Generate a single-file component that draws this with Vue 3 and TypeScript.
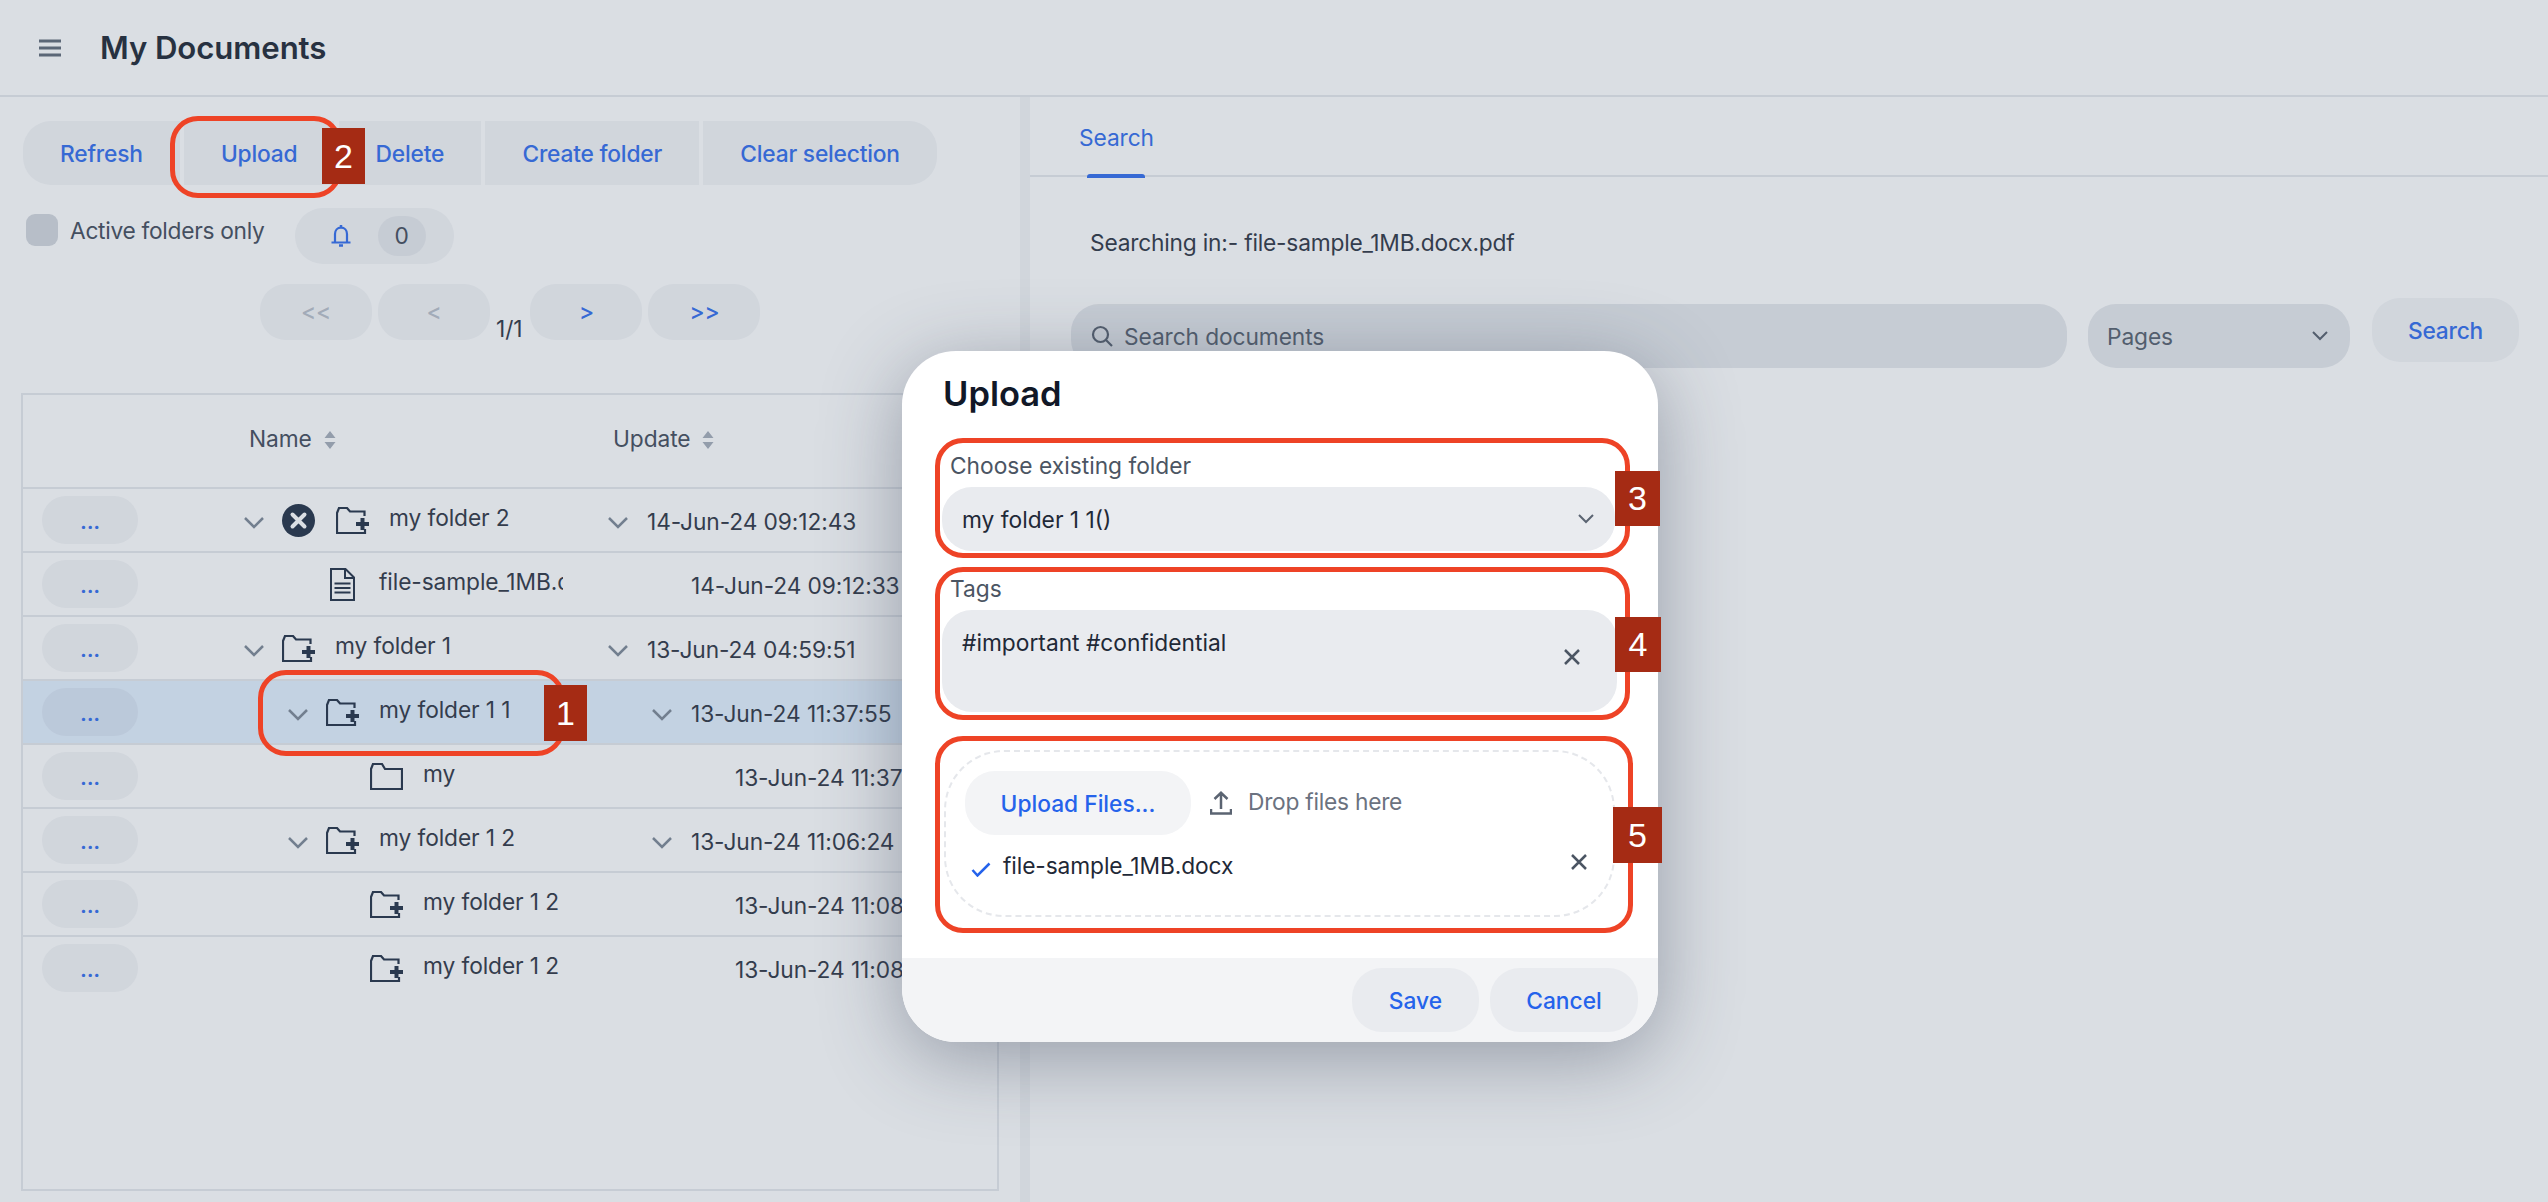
<script setup lang="ts">
interface TreeRow {
  name: string
  date: string
  depth: number
  icon: 'folderPlus' | 'folder' | 'file'
  open: boolean
  removable?: boolean
  selected?: boolean
}

const toolbar = ['Refresh', 'Upload', 'Delete', 'Create folder', 'Clear selection']

const rows: TreeRow[] = [
  { name: 'my folder 2', date: '14-Jun-24 09:12:43', depth: 0, icon: 'folderPlus', open: true, removable: true },
  { name: 'file-sample_1MB.docx.pdf', date: '14-Jun-24 09:12:33', depth: 1, icon: 'file', open: false },
  { name: 'my folder 1', date: '13-Jun-24 04:59:51', depth: 0, icon: 'folderPlus', open: true },
  { name: 'my folder 1 1', date: '13-Jun-24 11:37:55', depth: 1, icon: 'folderPlus', open: true, selected: true },
  { name: 'my', date: '13-Jun-24 11:37:55', depth: 2, icon: 'folder', open: false },
  { name: 'my folder 1 2', date: '13-Jun-24 11:06:24', depth: 1, icon: 'folderPlus', open: true },
  { name: 'my folder 1 2', date: '13-Jun-24 11:08:10', depth: 2, icon: 'folderPlus', open: false },
  { name: 'my folder 1 2', date: '13-Jun-24 11:08:10', depth: 2, icon: 'folderPlus', open: false }
]

const marks = [
  { x: 258, y: 670, w: 307, h: 86 },
  { x: 170, y: 116, w: 172, h: 82 },
  { x: 935, y: 438, w: 695, h: 120 },
  { x: 935, y: 567, w: 695, h: 153 },
  { x: 935, y: 736, w: 698, h: 197 }
]

const badges = [
  { n: 1, x: 544, y: 685, w: 43, h: 56 },
  { n: 2, x: 322, y: 128, w: 43, h: 56 },
  { n: 3, x: 1615, y: 471, w: 45, h: 55 },
  { n: 4, x: 1615, y: 617, w: 46, h: 55 },
  { n: 5, x: 1613, y: 807, w: 49, h: 56 }
]

const box = (m: { x: number; y: number; w: number; h: number }) => ({
  left: m.x + 'px',
  top: m.y + 'px',
  width: m.w + 'px',
  height: m.h + 'px'
})
</script>

<template>
  <div class="page">
    <header class="topbar">
      <svg class="menu-icon" width="22" height="18" viewBox="0 0 22 18">
        <path d="M0 2h22M0 9h22M0 16h22" stroke="#56606f" stroke-width="3" fill="none" />
      </svg>
      <h1 class="page-title">My Documents</h1>
    </header>

    <main class="content">
      <section class="left">
        <div class="toolbar">
          <button v-for="label in toolbar" :key="label" class="tool-btn">{{ label }}</button>
        </div>

        <div class="filters">
          <span class="checkbox"></span>
          <span class="check-label">Active folders only</span>
          <div class="notify">
            <svg width="20" height="24" viewBox="0 0 20 24" fill="none" stroke="#2563eb" stroke-width="2.200">
              <path d="M4 18V10c0-3.600 2.400-6.400 6-6.400s6 2.800 6 6.400v8M0.500 18.500h19" />
              <path d="M10 1v2.500M8 21.500h4" stroke-width="2.500" />
            </svg>
            <span class="count">0</span>
          </div>
        </div>

        <div class="pager">
          <button class="page-btn off">&lt;&lt;</button>
          <button class="page-btn off">&lt;</button>
          <span class="page-num">1/1</span>
          <button class="page-btn">&gt;</button>
          <button class="page-btn">&gt;&gt;</button>
        </div>

        <div class="table">
          <div class="thead">
            <div class="th name-th">
              Name
              <svg class="sort" width="12" height="18" viewBox="0 0 12 18"><path d="M6 0l5.500 7H.5zM6 18l5.500-7H.5z" /></svg>
            </div>
            <div class="th date-th">
              Update
              <svg class="sort" width="12" height="18" viewBox="0 0 12 18"><path d="M6 0l5.500 7H.5zM6 18l5.500-7H.5z" /></svg>
            </div>
          </div>

          <div v-for="(row, i) in rows" :key="i" class="row" :class="{ selected: row.selected }">
            <div class="action-cell"><button class="more">...</button></div>

            <div class="name-cell" :style="{ paddingLeft: row.depth * 44 + 'px' }">
              <span class="chev-slot">
                <svg v-if="row.open" width="22" height="13" viewBox="0 0 22 13" fill="none" stroke="#75808f" stroke-width="2.500">
                  <path d="M2 2l9 9 9-9" />
                </svg>
              </span>
              <svg v-if="row.removable" class="remove" width="33" height="33" viewBox="0 0 33 33">
                <circle cx="16.500" cy="16.500" r="16.500" fill="#14233a" />
                <path d="M10.500 10.500l12 12M22.500 10.500l-12 12" stroke="#fff" stroke-width="4" stroke-linecap="round" />
              </svg>
              <span class="icon-box">
                <svg v-if="row.icon === 'folderPlus'" width="33" height="27" viewBox="0 0 33 27" fill="none" stroke="#14233a" stroke-width="2.200">
                  <path d="M28.500 9V4.500H14L11 1H3L1 6v20h28v-4" />
                  <path d="M20 17h13M26.500 11v12" stroke-width="4" />
                </svg>
                <svg v-else-if="row.icon === 'folder'" width="33" height="27" viewBox="0 0 33 27" fill="none" stroke="#14233a" stroke-width="2.200">
                  <path d="M32 26V6H15L12 1H3L1 6v20z" />
                </svg>
                <svg v-else width="25" height="33" viewBox="0 0 25 33" fill="none" stroke="#14233a" stroke-width="2">
                  <path d="M1 1h14.500L24 9.500V32H1z" />
                  <path d="M15 1v9h9" />
                  <path d="M4.500 15.500h16M4.500 20h16M4.500 24.500h16" />
                </svg>
              </span>
              <span class="name-text">{{ row.name }}</span>
            </div>

            <div class="date-cell" :style="{ paddingLeft: row.depth * 44 + 'px' }">
              <span class="date-slot">
                <svg v-if="row.open" width="22" height="13" viewBox="0 0 22 13" fill="none" stroke="#75808f" stroke-width="2.500">
                  <path d="M2 2l9 9 9-9" />
                </svg>
              </span>
              <span class="date-text">{{ row.date }}</span>
            </div>
          </div>
        </div>
      </section>

      <div class="splitter"></div>

      <section class="right">
        <div class="tabs">
          <span class="tab">Search</span>
        </div>
        <p class="searching">Searching in:- file-sample_1MB.docx.pdf</p>
        <div class="search-row">
          <div class="search-input">
            <svg width="22" height="22" viewBox="0 0 22 22" fill="none" stroke="#4b5563" stroke-width="2.200">
              <circle cx="9.500" cy="9.500" r="7.500" />
              <path d="M15 15l6 6" />
            </svg>
            <span>Search documents</span>
          </div>
          <div class="pages-select">
            <span>Pages</span>
            <svg width="16" height="10" viewBox="0 0 16 10" fill="none" stroke="#4b5563" stroke-width="2">
              <path d="M1 1l7 7 7-7" />
            </svg>
          </div>
          <button class="search-btn">Search</button>
        </div>
      </section>
    </main>

    <div class="overlay"></div>

    <div class="modal">
      <div class="modal-body">
        <h2 class="modal-title">Upload</h2>

        <label class="field-label first">Choose existing folder</label>
        <div class="select">
          <span>my folder 1 1()</span>
          <svg width="16" height="10" viewBox="0 0 16 10" fill="none" stroke="#5b6472" stroke-width="2">
            <path d="M1 1l7 7 7-7" />
          </svg>
        </div>

        <label class="field-label">Tags</label>
        <div class="tags">
          <span>#important #confidential</span>
          <svg class="tags-x" width="16" height="16" viewBox="0 0 16 16" stroke="#4b5563" stroke-width="2.500">
            <path d="M1 1l14 14M15 1L1 15" />
          </svg>
        </div>

        <div class="dropzone">
          <div class="drop-top">
            <button class="upload-btn">Upload Files...</button>
            <svg width="22" height="24" viewBox="0 0 22 24" fill="none" stroke="#5b6472" stroke-width="2.500">
              <path d="M11 18V2M4.500 8L11 1.800 17.500 8" />
              <path d="M1 18v4.500h20V18" />
            </svg>
            <span class="drop-text">Drop files here</span>
          </div>
          <div class="file-row">
            <svg class="check" width="20" height="15" viewBox="0 0 20 15" fill="none" stroke="#2563eb" stroke-width="2.500">
              <path d="M1.500 8l5 5.500L18.500 1.500" />
            </svg>
            <span class="file-name">file-sample_1MB.docx</span>
            <svg class="file-x" width="16" height="16" viewBox="0 0 16 16" stroke="#4b5563" stroke-width="2.500">
              <path d="M1 1l14 14M15 1L1 15" />
            </svg>
          </div>
        </div>
      </div>

      <div class="modal-footer">
        <button class="foot-btn save">Save</button>
        <button class="foot-btn cancel">Cancel</button>
      </div>
    </div>

    <div v-for="(m, i) in marks" :key="'m' + i" class="mark" :style="box(m)"></div>
    <div v-for="b in badges" :key="'b' + b.n" class="badge" :style="box(b)">{{ b.n }}</div>
  </div>
</template>

<style scoped>
.page {
  position: relative;
  width: 100%;
  height: 1202px;
  overflow: hidden;
  background: #fff;
  color: #1f2937;
  font-family: Inter, "Noto Sans", sans-serif;
  font-size: 22.75px;
  letter-spacing: -0.1px;
}

button {
  border: none;
  font-family: inherit;
  font-size: 22.75px;
  font-weight: 500;
  letter-spacing: -0.2px;
  color: #2563eb;
  background: #f3f4f6;
  padding: 0;
}

.topbar {
  display: flex;
  align-items: center;
  gap: 39px;
  height: 95px;
  padding-left: 39px;
  border-bottom: 2px solid #e5e7eb;
}

.page-title {
  margin: 0;
  font-size: 31.2px;
  font-weight: 600;
  color: #111827;
}

.content {
  display: flex;
  height: 1105px;
}

.left {
  width: 1020px;
  flex-shrink: 0;
  padding-top: 24px;
}

.toolbar {
  display: flex;
  gap: 4.25px;
  margin-left: 23px;
}

.tool-btn {
  height: 64px;
  padding: 0 37px;
}

.tool-btn:first-child {
  border-radius: 28px 0 0 28px;
}

.tool-btn:last-child {
  border-radius: 0 28px 28px 0;
}

.filters {
  display: flex;
  align-items: flex-start;
  margin: 23px 0 0 26px;
}

.checkbox {
  width: 32px;
  height: 32px;
  margin-top: 6px;
  border-radius: 9px;
  background: #d1d5db;
}

.check-label {
  margin-left: 12px;
  line-height: 46px;
  color: #374151;
  letter-spacing: -0.3px;
}

.notify {
  display: flex;
  align-items: center;
  width: 159px;
  height: 56px;
  margin-left: 30px;
  padding-left: 36px;
  box-sizing: border-box;
  border-radius: 28px;
  background: #f3f4f6;
}

.count {
  width: 48px;
  height: 40px;
  margin-left: 27px;
  line-height: 40px;
  text-align: center;
  border-radius: 20px;
  background: #e5e7eb;
  color: #374151;
}

.pager {
  display: flex;
  gap: 6px;
  margin: 20px 0 0 260px;
  height: 56px;
}

.page-btn {
  width: 112px;
  height: 56px;
  border-radius: 26px;
  padding-bottom: 2px;
}

.page-btn.off {
  color: #b4bbc6;
}

.page-num {
  align-self: flex-end;
  margin-bottom: -2px;
  padding-right: 2px;
  line-height: 26px;
  color: #1f2937;
}

.table {
  width: 978px;
  height: 798px;
  box-sizing: border-box;
  margin: 53px 0 0 21px;
  overflow: hidden;
  border: 2px solid #e5e7eb;
}

.thead {
  display: flex;
  align-items: center;
  height: 94px;
  padding-bottom: 6px;
  box-sizing: border-box;
  border-bottom: 2px solid #e5e7eb;
  color: #374151;
}

.th {
  display: flex;
  align-items: center;
  gap: 12px;
  font-weight: 400;
}

.name-th {
  margin-left: 226px;
  width: 364px;
}

.sort {
  fill: #a0a8b5;
  margin-top: 4px;
}

.row {
  display: flex;
  align-items: center;
  height: 62px;
  border-bottom: 2px solid #e5e7eb;
}

.row:last-child {
  border-bottom: none;
}

.row.selected {
  background: #e1effe;
}

.action-cell {
  width: 220px;
  flex-shrink: 0;
  padding-left: 19px;
  box-sizing: border-box;
}

.more {
  display: block;
  width: 96px;
  height: 48px;
  border-radius: 24px;
}

.selected .more {
  background: #d6e3f3;
}

.name-cell {
  display: flex;
  align-items: center;
  width: 320px;
  flex-shrink: 0;
  box-sizing: border-box;
  overflow: hidden;
}

.chev-slot {
  width: 39px;
  flex-shrink: 0;
  line-height: 0;
  margin-top: 4px;
}

.remove {
  flex-shrink: 0;
  margin: 0 21px 0 0;
}

.icon-box {
  display: flex;
  justify-content: center;
  width: 33px;
  flex-shrink: 0;
  margin-right: 20px;
}

.name-text {
  white-space: nowrap;
  margin-bottom: 5px;
}

.date-cell {
  display: flex;
  align-items: center;
  margin-left: 44px;
  white-space: nowrap;
}

.date-slot {
  width: 40px;
  flex-shrink: 0;
  line-height: 0;
  margin-top: 4px;
}

.date-text {
  margin-top: 2px;
}

.splitter {
  width: 10px;
  flex-shrink: 0;
  background: #f3f4f6;
}

.right {
  flex: 1;
  min-width: 0;
}

.tabs {
  height: 78px;
  border-bottom: 2px solid #e5e7eb;
  padding-left: 49px;
}

.tab {
  position: relative;
  display: block;
  width: fit-content;
  padding-top: 27px;
  line-height: 28px;
  color: #2563eb;
}

.tab::after {
  content: "";
  position: absolute;
  left: 8px;
  right: 9px;
  top: 77px;
  height: 4px;
  border-radius: 3px 3px 0 0;
  background: #2563eb;
}

.searching {
  margin: 50px 0 0 60px;
  line-height: 32px;
  color: #1f2937;
  letter-spacing: -0.2px;
}

.search-row {
  display: flex;
  align-items: flex-start;
  margin: 39px 0 0 41px;
}

.search-input,
.pages-select {
  display: flex;
  align-items: center;
  height: 64px;
  margin-top: 6px;
  border-radius: 28px;
  background: #e5e7eb;
  color: #4b5563;
}

.search-input {
  width: 996px;
  gap: 11px;
  padding-left: 20px;
  box-sizing: border-box;
}

.pages-select {
  justify-content: space-between;
  width: 262px;
  margin-left: 21px;
  padding: 0 22px 0 19px;
  box-sizing: border-box;
}

.search-btn {
  width: 147px;
  height: 64px;
  margin-left: 22px;
  border-radius: 28px;
}

.overlay {
  position: absolute;
  inset: 0;
  background: rgba(107, 122, 143, 0.25);
}

.modal {
  position: absolute;
  left: 902px;
  top: 351px;
  display: flex;
  flex-direction: column;
  width: 756px;
  height: 691px;
  overflow: hidden;
  border-radius: 54px;
  background: #fff;
  box-shadow: 0 16px 80px rgba(55, 65, 85, 0.42);
}

.modal-body {
  flex: 1;
  padding: 22px 0 0 40px;
  letter-spacing: 0;
}

.modal-title {
  margin: 0 0 0 1px;
  line-height: 42px;
  font-size: 34.5px;
  font-weight: 600;
  color: #111827;
}

.field-label {
  display: block;
  margin: 23px 0 6px 8px;
  line-height: 30px;
  color: #4b5563;
}

.field-label.first {
  margin-top: 36px;
}

.select,
.tags {
  position: relative;
  display: flex;
  box-sizing: border-box;
  border-radius: 30px;
  background: #e9ebef;
  color: #1f2937;
  padding-left: 20px;
}

.select {
  align-items: center;
  justify-content: space-between;
  width: 673px;
  height: 64px;
  padding-right: 21px;
}

.tags {
  width: 675px;
  height: 102px;
  padding-top: 18px;
  line-height: 30px;
}

.tags-x {
  position: absolute;
  right: 37px;
  top: 39px;
}

.dropzone {
  width: 671px;
  height: 167px;
  box-sizing: border-box;
  margin: 38px 0 0 2px;
  padding: 19px 19px 0;
  border: 2px dashed #e5e7eb;
  border-radius: 60px;
}

.drop-top {
  display: flex;
  align-items: center;
}

.upload-btn {
  width: 226px;
  height: 64px;
  margin-right: 19px;
  border-radius: 30px;
  letter-spacing: 0;
}

.drop-text {
  margin: 0 0 4px 16px;
  color: #6b7280;
  letter-spacing: -0.25px;
}

.file-row {
  display: flex;
  align-items: center;
  margin-top: 16px;
  padding-left: 6px;
  line-height: 30px;
  letter-spacing: -0.1px;
}

.check {
  margin: 6px 12px 0 0;
}

.file-x {
  margin: -8px 7px 0 auto;
}

.modal-footer {
  display: flex;
  justify-content: flex-end;
  gap: 11px;
  height: 84px;
  box-sizing: border-box;
  padding: 10px 20px 0 0;
  background: #f3f4f6;
}

.foot-btn {
  height: 64px;
  border-radius: 30px;
  background: #e9ebef;
  letter-spacing: 0;
}

.save {
  width: 127px;
}

.cancel {
  width: 148px;
}

.mark {
  position: absolute;
  box-sizing: border-box;
  border: 5px solid #ee4326;
  border-radius: 28px;
}

.badge {
  position: absolute;
  display: flex;
  align-items: center;
  justify-content: center;
  background: #a52b14;
  color: #fff;
  font-family: "Liberation Sans", sans-serif;
  font-size: 34px;
}
</style>
